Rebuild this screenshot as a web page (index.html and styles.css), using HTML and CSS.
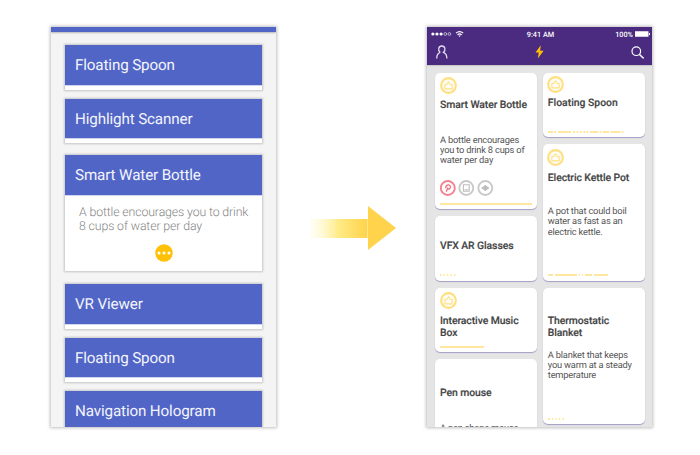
FILE: index.html
```html
<!DOCTYPE html>
<html lang="en">
<head>
<meta charset="utf-8">
<title>Inventory redesign</title>
<link rel="stylesheet" href="styles.css">
</head>
<body>
<svg width="0" height="0" class="defs">
  <symbol id="badge" viewBox="0 0 16 16">
    <circle cx="8" cy="8" r="6.9" fill="#fffdf5" stroke="#ffdf80" stroke-width="2"/>
    <path d="M4.6 7H6.4L8 4.5L9.6 7H11.4V11.2H4.6Z" fill="none" stroke="#ffdf80" stroke-width="1" stroke-linejoin="round"/>
  </symbol>
</svg>
<main class="stage">
  <section class="phone before">
    <div class="topbar"></div>
    <div class="list">
      <article class="item"><h2>Floating Spoon</h2></article>
      <article class="item"><h2>Highlight Scanner</h2></article>
      <article class="item open">
        <h2>Smart Water Bottle</h2>
        <p>A bottle encourages you to drink<br>8 cups of water per day</p>
        <svg class="more" width="18" height="18" viewBox="0 0 18 18"><circle cx="9" cy="9" r="8.7" fill="#ffc107"/><g fill="#fff"><circle cx="4" cy="9" r="1.5"/><circle cx="9" cy="9" r="1.5"/><circle cx="14" cy="9" r="1.5"/></g></svg>
      </article>
      <article class="item"><h2>VR Viewer</h2></article>
      <article class="item"><h2>Floating Spoon</h2></article>
      <article class="item"><h2>Navigation Hologram</h2></article>
    </div>
  </section>

  <svg class="arrow" width="86" height="46" viewBox="0 0 86 46">
    <defs><linearGradient id="fade"><stop offset="0" stop-color="#fffac8" stop-opacity=".15"/><stop offset=".5" stop-color="#ffea85"/><stop offset="1" stop-color="#ffd34b"/></linearGradient></defs>
    <path d="M0 14H57.6V33H0Z" fill="url(#fade)"/><path d="M58 1V45L86 23Z" fill="#ffd34b"/>
  </svg>

  <section class="phone after">
    <header>
      <div class="status">
        <svg width="34" height="8" viewBox="0 0 34 8"><g fill="#fff"><circle cx="1.9" cy="4" r="1.6"/><circle cx="6" cy="4" r="1.6"/><circle cx="10.1" cy="4" r="1.6"/></g><g fill="none" stroke="#fff" stroke-width=".6"><circle cx="14.3" cy="4" r="1.4"/><circle cx="18.4" cy="4" r="1.4"/></g><path d="M25 3.2Q28.6.1 32.2 3.2M26.5 4.8Q28.6 3 30.7 4.8" fill="none" stroke="#fff" stroke-width="1.1"/><path d="M27.3 5.5H29.9L28.6 6.9Z" fill="#fff"/></svg>
        <span class="time">9:41 AM</span>
        <span class="power">100%<svg width="15" height="6" viewBox="0 0 15 6"><path d="M0 .2H13.5V5.8H0ZM14 2H15V4H14Z" fill="#fff"/></svg></span>
      </div>
      <nav>
        <svg width="12" height="14" viewBox="0 0 12 14"><path d="M4.2 7.4C1.4 4.8 2.6 1 5.8 1S10.2 4.8 7.4 7.4C10.1 8.3 10.8 10 10.9 13.4M4.2 7.4C1.5 8.3.8 10 .7 13.4" fill="none" stroke="#e6ddf0" stroke-width="1.3"/></svg>
        <svg width="9" height="14" viewBox="0 0 9 14"><path d="M5.8.2L.5 7.6H3.8L2.8 13.5L8.6 5.8H5.1Z" fill="#ffc107"/></svg>
        <svg width="14" height="14" viewBox="0 0 14 14"><circle cx="6.3" cy="6.2" r="4.3" fill="none" stroke="#fff" stroke-width="1.2"/><path d="M9.5 9.4L13.7 13.4" stroke="#fff" stroke-width="1.4"/></svg>
      </nav>
    </header>
    <div class="board">
      <div class="column">
        <article class="card tall">
          <svg class="badge"><use href="#badge"/></svg>
          <h3>Smart Water Bottle</h3>
          <p>A bottle encourages<br>you to drink 8 cups of<br>water per day</p>
          <svg class="tags" width="56" height="16" viewBox="0 0 56 16"><g fill="#fff" stroke-width="1.9"><circle cx="7.8" cy="8" r="7" stroke="#f5828f"/><circle cx="26.3" cy="8" r="7" stroke="#c9c9c9"/><circle cx="45.3" cy="8" r="7" stroke="#c9c9c9"/></g><path d="M6.2 11.7L8 7.5M6 8.3C5 5.2 9.2 3.8 10.2 6.1S8.8 9.8 7.3 8.8" fill="none" stroke="#f5687a" stroke-width="1.2"/><path d="M23.4 4.7H29.2V11.3H23.4ZM24.5 9.8H28.1" fill="none" stroke="#bdbdbd" stroke-width="1.1"/><path d="M41 8L43.6 6.2L45.3 4.8L47 6.2L49.6 8L47 9.8L45.3 11.2L43.6 9.8Z" fill="#bdbdbd"/></svg>
          <svg class="meter" viewBox="0 0 92 2"><path d="M0 1H92"/></svg>
        </article>
        <article class="card short">
          <h3 class="plain">VFX AR Glasses</h3>
          <svg class="meter" viewBox="0 0 92 2"><path d="M0 1h1.5m2 0h1.2m2.2 0h1.4m2.2 0h1.3m2.2 0h1.5"/></svg>
        </article>
        <article class="card short music">
          <svg class="badge"><use href="#badge"/></svg>
          <h3>Interactive Music<br>Box</h3>
          <svg class="meter" viewBox="0 0 92 2"><path d="M0 1H44"/></svg>
        </article>
        <article class="card tall pen">
          <h3 class="plain">Pen mouse</h3>
          <p>A pen shape mouse</p>
        </article>
      </div>
      <div class="column">
        <article class="card short spoon">
          <svg class="badge"><use href="#badge"/></svg>
          <h3>Floating Spoon</h3>
          <svg class="meter" viewBox="0 0 92 2"><path d="M0 1h5m1 0h2m2 0h13m2 0h2m1.5 0h2m1.5 0h2m1.5 0h2m1 0h2m1.5 0h8m1.5 0h2m1.5 0h6m1.5 0h10m1.5 0h1.5"/></svg>
        </article>
        <article class="card tall kettle">
          <svg class="badge"><use href="#badge"/></svg>
          <h3>Electric Kettle Pot</h3>
          <p>A pot that could boil<br>water as fast as an<br>electric kettle.</p>
          <svg class="meter" viewBox="0 0 92 2"><path d="M0 1h5m2 0h22m2 0h1m2 0h1m2 0h7m2 0h14"/></svg>
        </article>
        <article class="card tall blanket">
          <h3>Thermostatic<br>Blanket</h3>
          <p>A blanket that keeps<br>you warm at a steady<br>temperature</p>
          <svg class="meter" viewBox="0 0 92 2"><path d="M0 1h2m2 0h1.2m2.3 0h1.3m2.2 0h1.3m2.2 0h1.5"/></svg>
        </article>
      </div>
    </div>
  </section>
</main>
</body>
</html>
```
FILE: styles.css
```css
* { box-sizing: border-box; }
body { margin: 0; background: #fff; font-family: Roboto, "Liberation Sans", sans-serif; text-rendering: geometricPrecision; }
h2, h3, p { margin: 0; white-space: nowrap; }
svg { display: block; flex: none; }
.defs { position: absolute; }
.stage { width: 700px; height: 455px; padding: 27px 48px 0 51px; display: flex; align-items: flex-start; overflow: hidden; }
.phone { width: 225px; height: 400px; flex: none; overflow: hidden; box-shadow: 0 0 3px 1px rgba(0,0,0,.25); }

.before { background: #f4f4f4; }
.topbar { height: 5px; background: #5165c7; box-shadow: 0 1px 2px rgba(0,0,0,.25); }
.list { padding: 13px 14px 0 14px; display: flex; flex-direction: column; gap: 9px; }
.item { height: 44.7px; flex: none; background: #fff; box-shadow: 0 0 2px 1px rgba(0,0,0,.2); }
.item h2 { height: 40.5px; padding-left: 10px; border-bottom: 1px solid #cfd4ef; background: #5165c7; color: #f3f4fb; font-size: 15.2px; line-height: 40.6px; font-weight: 400; letter-spacing: -.13px; }
.open { height: 116.5px; margin: 2.4px 0 3.8px; }
.open h2 { height: 41px; }
.open p { padding: 10px 0 0 14px; color: #858585; font-size: 12.3px; line-height: 14px; font-weight: 300; letter-spacing: -.12px; }
.more { margin: 10.5px auto 0; }

.arrow { margin: 178px 31px 0 34px; }

.after { background: #e5e5e5; }
header { height: 38px; background: #4a2b7f; color: #fff; box-shadow: 0 1px 1px rgba(0,0,0,.12); }
.status { height: 14px; padding: 0 2px 0 4px; display: grid; grid-template-columns: 1fr auto 1fr; align-items: center; font-size: 7.3px; font-weight: 500; }
.power { display: flex; align-items: center; justify-content: flex-end; gap: 2px; }
nav { padding: 3.5px 8px 0 9px; display: flex; justify-content: space-between; }
.board { padding: 7.5px 7.5px 0 8px; display: flex; gap: 6.5px; }
.column { width: 101.5px; display: flex; flex-direction: column; gap: 7px; }
.card { height: 64.7px; flex: none; padding: 4.5px 5px; display: flex; flex-direction: column; background: #fff; border-radius: 5px; box-shadow: 0 1px 1px #a79bc6; color: #444; }
.tall { height: 136.5px; }
.badge { width: 17px; height: 17px; margin-left: -.5px; }
.card h3 { margin-top: 4.5px; font-size: 10.4px; line-height: 12.3px; font-weight: 500; letter-spacing: -.08px; -webkit-text-stroke: .15px #444; }
.card p { margin-top: 24.8px; font-size: 9.3px; line-height: 10.4px; letter-spacing: -.2px; color: #555; }
.card h3.plain { margin-top: 19.5px; }
.tags { margin-top: 13px; }
.meter { width: 92px; height: 2px; margin-top: auto; fill: none; stroke: #ffdf80; stroke-width: 1.5; }
.column + .column .card { padding-left: 4.8px; }
.card.music h3 { margin-top: 5.5px; }
.card.spoon { padding-top: 3.7px; }
.card.spoon h3 { margin-top: 3.8px; letter-spacing: 0; }
.card.kettle h3 { margin-top: 6px; }
.card.kettle p { margin-top: 23px; }
.card.blanket h3 { margin-top: 22.5px; }
.card.blanket p { margin-top: 11.3px; }
.card.pen h3 { margin-top: 23.5px; }
.card.pen p { margin-top: 24px; }
```
